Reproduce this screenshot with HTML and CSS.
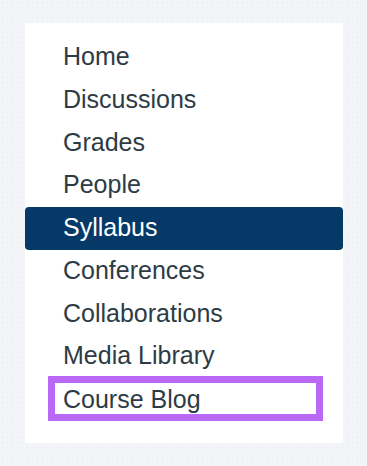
FILE: index.html
```html
<!DOCTYPE html>
<html lang="en">
<head>
    <meta charset="UTF-8">
    <meta name="viewport" content="width=device-width, initial-scale=1.0">
    <title>Course Navigation</title>
    <link rel="stylesheet" href="styles.css">
</head>
<body>
    <nav class="course-nav">
        <ul>
            <li><a href="#">Home</a></li>
            <li><a href="#">Discussions</a></li>
            <li><a href="#">Grades</a></li>
            <li><a href="#">People</a></li>
            <li><a href="#" class="active">Syllabus</a></li>
            <li><a href="#">Conferences</a></li>
            <li><a href="#">Collaborations</a></li>
            <li><a href="#">Media Library</a></li>
            <li class="focused"><a href="#">Course Blog</a></li>
        </ul>
    </nav>
</body>
</html>
```

FILE: styles.css
```css
body {
  margin: 0;
  height: 466px;
  font-family: "Liberation Sans", Arial, sans-serif;
  background-color: #f3f4f8;
  background-image: radial-gradient(circle, #e6e8ef 0.6px, transparent 1px);
  background-size: 5px 5px;
  padding: 23px 24px 0 25px;
  box-sizing: border-box;
}
.course-nav {
  width: 318px;
  background: #fff;
  padding: 13px 0 22px;
  box-sizing: border-box;
}
.course-nav ul { list-style: none; margin: 0; padding: 0; }
.course-nav a {
  display: block;
  height: 42.75px;
  line-height: 40px;
  padding-left: 38px;
  font-size: 25px;
  color: #2d3b45;
  text-decoration: none;
}
.course-nav a.active {
  background-color: #043968;
  color: #fff;
  border-radius: 4px;
}
.course-nav .focused a {
  height: 31px;
  width: 253px;
  margin: -2px 0 0 23px;
  padding: 0 0 0 8px;
  line-height: 32px;
  border: 7px solid #b968f8;
}
```
